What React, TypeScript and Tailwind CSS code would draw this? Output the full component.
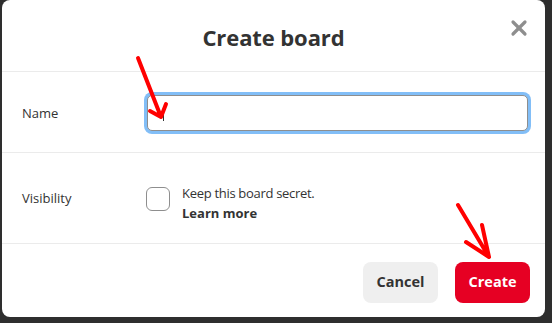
import { X } from 'lucide-react'

export default function App() {
  return (
    <div
      className="relative w-[552px] h-[323px] bg-[#2e2e2e] pl-[2px] overflow-hidden"
      style={{ fontFamily: '"Open Sans", "Noto Sans", sans-serif' }}
    >
      <div className="w-[543px] h-[317px] bg-white rounded-lg flex flex-col text-[#333333]">
        {/* header */}
        <div className="relative h-[72px] shrink-0 flex items-center justify-center border-b border-[#ebebeb]">
          <h1 className="text-[22px] font-bold tracking-[-0.1px] mt-[3px]">Create board</h1>
          <button className="absolute right-[14px] top-[16px] text-[#8e8e8e]">
            <X size={24} strokeWidth={3.2} />
          </button>
        </div>

        {/* name */}
        <div className="h-[81px] shrink-0 flex items-center border-b border-[#ebebeb] pl-[20px] pr-[14px]">
          <span className="w-[122px] text-[13px] mt-[3px]">Name</span>
          <div className="flex-1 rounded-[8px] bg-[#82bef7] p-[3px] mt-[2px]">
            <div className="h-[36px] rounded-[5px] border border-[#8e8e8e] bg-white flex items-center pl-[15px]">
              <span className="w-px h-[14px] bg-[#333] mt-[2px]" />
            </div>
          </div>
        </div>

        {/* visibility */}
        <div className="h-[91px] shrink-0 flex items-center border-b border-[#ebebeb] pl-[20px]">
          <span className="w-[124px] text-[13px] mt-[2px]">Visibility</span>
          <div className="flex items-center gap-[12px] mt-[2px]">
            <div className="w-[24px] h-[24px] rounded-[6px] border border-[#8e8e8e]" />
            <div className="flex flex-col text-[13px] leading-[20px] mt-[8px]">
              <span className="tracking-[-0.3px]">Keep this board secret.</span>
              <span className="font-bold">Learn more</span>
            </div>
          </div>
        </div>

        {/* footer */}
        <div className="flex-1 flex items-center justify-end gap-[17px] pr-[15px] pt-[3px]">
          <button className="w-[75px] h-[41px] rounded-[8px] bg-[#efefef] text-[14.5px] font-bold text-[#333]">
            Cancel
          </button>
          <button className="w-[75px] h-[41px] rounded-[8px] bg-[#e60023] text-[14.5px] font-bold text-white">
            Create
          </button>
        </div>
      </div>

      {/* red annotation arrows */}
      <svg
        className="absolute inset-0 pointer-events-none"
        width="552"
        height="323"
        viewBox="0 0 552 323"
        fill="none"
        stroke="#ff0000"
        strokeWidth="4"
        strokeLinecap="round"
        strokeLinejoin="round"
      >
        <path d="M138 58 L161 117 M150 111 L161 117 L166 104" />
        <path d="M458 205 L489 257 M466 242 L489 257 L482 225" />
      </svg>
    </div>
  )
}
